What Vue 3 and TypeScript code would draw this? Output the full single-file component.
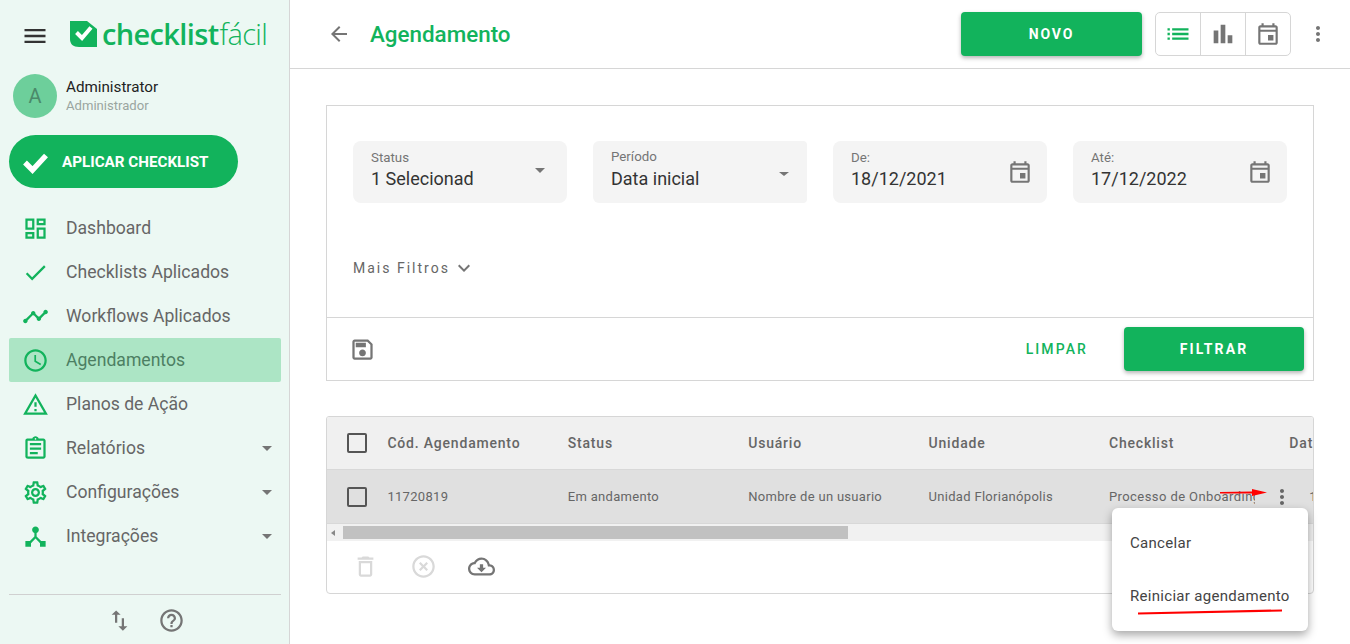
<script setup lang="ts">
const P: Record<string, string> = {
  menu: 'M3 18h18v-2H3v2zm0-5h18v-2H3v2zm0-7v2h18V6H3z',
  dash: 'M19 5v2h-4V5h4M9 5v6H5V5h4m10 8v6h-4v-6h4M9 17v2H5v-2h4M21 3h-8v6h8V3zM11 3H3v10h8V3zm10 8h-8v10h8V11zm-10 4H3v6h8v-6z',
  check: 'M9 16.17L4.83 12l-1.42 1.41L9 19 21 7l-1.41-1.41z',
  timeline: 'M23 8c0 1.1-.9 2-2 2-.18 0-.35-.02-.51-.07l-3.56 3.55c.05.16.07.34.07.52 0 1.1-.9 2-2 2s-2-.9-2-2c0-.18.02-.36.07-.52l-2.55-2.55c-.16.05-.34.07-.52.07s-.36-.02-.52-.07l-4.55 4.56c.05.16.07.33.07.51 0 1.1-.9 2-2 2s-2-.9-2-2 .9-2 2-2c.18 0 .35.02.51.07l4.56-4.55C8.02 9.36 8 9.18 8 9c0-1.1.9-2 2-2s2 .9 2 2c0 .18-.02.36-.07.52l2.55 2.55c.16-.05.34-.07.52-.07s.36.02.52.07l3.55-3.56C19.02 8.35 19 8.18 19 8c0-1.1.9-2 2-2s2 .9 2 2z',
  clock: 'M11.99 2C6.47 2 2 6.48 2 12s4.47 10 9.99 10C17.52 22 22 17.52 22 12S17.52 2 11.99 2zM12 20c-4.42 0-8-3.58-8-8s3.58-8 8-8 8 3.58 8 8-3.58 8-8 8zm.5-13H11v6l5.25 3.15.75-1.23-4.5-2.67z',
  warn: 'M12 5.99L19.53 19H4.47L12 5.99M12 2L1 21h22L12 2zm1 14h-2v2h2v-2zm0-6h-2v4h2v-4z',
  report: 'M7 15h7v2H7zm0-4h10v2H7zm0-4h10v2H7zm12-4h-4.18C14.4 1.84 13.3 1 12 1c-1.3 0-2.4.84-2.82 2H5c-.14 0-.27.01-.4.04-.39.08-.74.28-1.01.55-.18.18-.33.4-.43.64-.1.23-.16.49-.16.77v14c0 .27.06.54.16.78s.25.45.43.64c.27.27.62.47 1.01.55.13.02.26.03.4.03h14c1.1 0 2-.9 2-2V5c0-1.1-.9-2-2-2zm-7-.25c.41 0 .75.34.75.75s-.34.75-.75.75-.75-.34-.75-.75.34-.75.75-.75zM19 19H5V5h14v14z',
  gear: 'M19.43 12.98c.04-.32.07-.64.07-.98 0-.34-.03-.66-.07-.98l2.11-1.65c.19-.15.24-.42.12-.64l-2-3.46c-.09-.16-.26-.25-.44-.25-.06 0-.12.01-.17.03l-2.49 1c-.52-.4-1.08-.73-1.69-.98l-.38-2.65C14.46 2.18 14.25 2 14 2h-4c-.25 0-.46.18-.49.42l-.38 2.65c-.61.25-1.17.59-1.69.98l-2.49-1c-.06-.02-.12-.03-.18-.03-.17 0-.34.09-.43.25l-2 3.46c-.13.22-.07.49.12.64l2.11 1.65c-.04.32-.07.65-.07.98 0 .33.03.66.07.98l-2.11 1.65c-.19.15-.24.42-.12.64l2 3.46c.09.16.26.25.44.25.06 0 .12-.01.17-.03l2.49-1c.52.4 1.08.73 1.69.98l.38 2.65c.03.24.24.42.49.42h4c.25 0 .46-.18.49-.42l.38-2.65c.61-.25 1.17-.59 1.69-.98l2.49 1c.06.02.12.03.18.03.17 0 .34-.09.43-.25l2-3.46c.12-.22.07-.49-.12-.64l-2.11-1.65zm-1.98-1.71c.04.31.05.52.05.73 0 .21-.02.43-.05.73l-.14 1.13.89.7 1.08.84-.7 1.21-1.27-.51-1.04-.42-.9.68c-.43.32-.84.56-1.25.73l-1.06.43-.16 1.13-.2 1.35h-1.4l-.19-1.35-.16-1.13-1.06-.43c-.43-.18-.83-.41-1.23-.71l-.91-.7-1.06.43-1.27.51-.7-1.21 1.08-.84.89-.7-.14-1.13c-.03-.31-.05-.54-.05-.74s.02-.43.05-.73l.14-1.13-.89-.7-1.08-.84.7-1.21 1.27.51 1.04.42.9-.68c.43-.32.84-.56 1.25-.73l1.06-.43.16-1.13.2-1.35h1.39l.19 1.35.16 1.13 1.06.43c.43.18.83.41 1.23.71l.91.7 1.06-.43 1.27-.51.7 1.21-1.07.85-.89.7.14 1.13zM12 8c-2.21 0-4 1.79-4 4s1.79 4 4 4 4-1.79 4-4-1.79-4-4-4zm0 6c-1.1 0-2-.9-2-2s.9-2 2-2 2 .9 2 2-.9 2-2 2z',
  hub: 'M17 16l-4-4V8.82C14.16 8.4 15 7.3 15 6c0-1.66-1.34-3-3-3S9 4.34 9 6c0 1.3.84 2.4 2 2.82V12l-4 4H3v5h5v-3.05l4-4.2 4 4.2V21h5v-5h-4z',
  swap: 'M16 17.01V10h-2v7.01h-3L15 21l4-3.99h-3zM9 3L5 6.99h3V14h2V6.99h3L9 3z',
  help: 'M11 18h2v-2h-2v2zm1-16C6.48 2 2 6.48 2 12s4.48 10 10 10 10-4.48 10-10S17.52 2 12 2zm0 18c-4.41 0-8-3.59-8-8s3.59-8 8-8 8 3.59 8 8-3.59 8-8 8zm0-14c-2.21 0-4 1.79-4 4h2c0-1.1.9-2 2-2s2 .9 2 2c0 2-3 1.75-3 5h2c0-2.25 3-2.5 3-5 0-2.21-1.79-4-4-4z',
  back: 'M20 11H7.83l5.59-5.59L12 4l-8 8 8 8 1.41-1.41L7.83 13H20v-2z',
  list: 'M3 13h2v-2H3v2zm0 4h2v-2H3v2zm0-8h2V7H3v2zm4 4h14v-2H7v2zm0 4h14v-2H7v2zM7 7v2h14V7H7z',
  bars: 'M4 9h4v11H4zm12 4h4v7h-4zm-6-9h4v16h-4z',
  event: 'M19 4h-1V2h-2v2H8V2H6v2H5c-1.11 0-1.99.9-1.99 2L3 20c0 1.1.89 2 2 2h14c1.1 0 2-.9 2-2V6c0-1.1-.9-2-2-2zm0 16H5V10h14v10zm0-12H5V6h14v2zm-7 5h5v5h-5z',
  more: 'M12 8c1.1 0 2-.9 2-2s-.9-2-2-2-2 .9-2 2 .9 2 2 2zm0 2c-1.1 0-2 .9-2 2s.9 2 2 2 2-.9 2-2-.9-2-2-2zm0 6c-1.1 0-2 .9-2 2s.9 2 2 2 2-.9 2-2-.9-2-2-2z',
  expand: 'M16.59 8.59L12 13.17 7.41 8.59 6 10l6 6 6-6z',
  save: 'M17 3H5c-1.11 0-2 .9-2 2v14c0 1.1.89 2 2 2h14c1.1 0 2-.9 2-2V7l-4-4zm2 16H5V5h11.17L19 7.83V19zm-7-7c-1.66 0-3 1.34-3 3s1.34 3 3 3 3-1.34 3-3-1.34-3-3-3zM6 6h9v4H6z',
  trash: 'M6 19c0 1.1.9 2 2 2h8c1.1 0 2-.9 2-2V7H6v12zM8 9h8v10H8V9zm7.5-5l-1-1h-5l-1 1H5v2h14V4z',
  off: 'M14.59 8L12 10.59 9.41 8 8 9.41 10.59 12 8 14.59 9.41 16 12 13.41 14.59 16 16 14.59 13.41 12 16 9.41 14.59 8zM12 2C6.47 2 2 6.47 2 12s4.47 10 10 10 10-4.47 10-10S17.53 2 12 2zm0 18c-4.41 0-8-3.59-8-8s3.59-8 8-8 8 3.59 8 8-3.59 8-8 8z',
  cloud: 'M19.35 10.04C18.67 6.59 15.64 4 12 4 9.11 4 6.6 5.64 5.35 8.04 2.34 8.36 0 10.91 0 14c0 3.31 2.69 6 6 6h13c2.76 0 5-2.24 5-5 0-2.64-2.05-4.78-4.65-4.96zM19 18H6c-2.21 0-4-1.79-4-4 0-2.05 1.53-3.76 3.56-3.97l1.07-.11.5-.95C8.08 7.14 9.94 6 12 6c2.62 0 4.88 1.86 5.39 4.43l.3 1.5 1.53.11c1.56.1 2.78 1.41 2.78 2.96 0 1.65-1.35 3-3 3zm-5.55-8h-2.9v3H8l4 4 4-4h-2.55z',
}

const nav = [
  { label: 'Dashboard', icon: P.dash },
  { label: 'Checklists Aplicados', icon: P.check },
  { label: 'Workflows Aplicados', icon: P.timeline },
  { label: 'Agendamentos', icon: P.clock, active: true },
  { label: 'Planos de Ação', icon: P.warn },
  { label: 'Relatórios', icon: P.report, caret: true },
  { label: 'Configurações', icon: P.gear, caret: true },
  { label: 'Integrações', icon: P.hub, caret: true },
]

const fields = [
  { label: 'Status', value: '1 Selecionado', kind: 'caret' },
  { label: 'Período', value: 'Data inicial', kind: 'caret' },
  { label: 'De:', value: '18/12/2021', kind: 'date' },
  { label: 'Até:', value: '17/12/2022', kind: 'date' },
]

const headers = ['Cód. Agendamento', 'Status', 'Usuário', 'Unidade', 'Checklist', 'Data']
const cells = ['11720819', 'Em andamento', 'Nombre de un usuario', 'Unidad Florianópolis']
</script>

<template>
  <div class="app">
    <aside class="side">
      <div class="brand">
        <svg class="ic burger" viewBox="0 0 24 24"><path :d="P.menu" /></svg>
        <svg class="mark" viewBox="0 0 27 26">
          <path d="M0 0H17L27 8V26H9C3 26 0 23 0 18Z" fill="#12b35c" />
          <path d="M6.5 11.5L12 17 21 6.5" fill="none" stroke="#fff" stroke-width="4" />
        </svg>
        <span class="logo"><b>checklist</b><i>fácil</i></span>
      </div>

      <div class="user">
        <div class="avatar">A</div>
        <div class="who">
          <div class="name">Administrator</div>
          <div class="role">Administrador</div>
        </div>
      </div>

      <button class="apply">
        <svg viewBox="0 0 27 24"><path d="M3 12.5L10.5 20 24 5.5" fill="none" stroke="#fff" stroke-width="5.4" /></svg>
        <span>APLICAR CHECKLIST</span>
      </button>

      <nav class="nav">
        <a v-for="n in nav" :key="n.label" class="item" :class="{ active: n.active }">
          <svg class="ic nav-ic" viewBox="0 0 24 24"><path :d="n.icon" /></svg>
          <span class="lbl">{{ n.label }}</span>
          <span v-if="n.caret" class="caret side-caret"></span>
        </a>
      </nav>

      <div class="side-foot">
        <svg class="ic foot-ic" viewBox="0 0 24 24"><path :d="P.swap" /></svg>
        <svg class="ic foot-ic" viewBox="0 0 24 24"><path :d="P.help" /></svg>
      </div>
    </aside>

    <main class="main">
      <header class="top">
        <svg class="ic back" viewBox="0 0 24 24"><path :d="P.back" /></svg>
        <h1>Agendamento</h1>
        <button class="btn novo">NOVO</button>
        <div class="views">
          <span class="view"><svg class="ic on" viewBox="0 0 24 24"><path :d="P.list" /></svg></span>
          <span class="view"><svg class="ic" viewBox="0 0 24 24"><path :d="P.bars" /></svg></span>
          <span class="view"><svg class="ic cal" viewBox="0 0 24 24"><path :d="P.event" /></svg></span>
        </div>
        <svg class="ic top-more" viewBox="0 0 24 24"><path :d="P.more" /></svg>
      </header>

      <section class="card filters">
        <div class="fields">
          <div v-for="f in fields" :key="f.label" class="field">
            <div class="f-text">
              <div class="f-label">{{ f.label }}</div>
              <div class="f-value">{{ f.value }}</div>
            </div>
            <span v-if="f.kind === 'caret'" class="caret f-caret"></span>
            <svg v-else class="ic f-date" viewBox="0 0 24 24"><path :d="P.event" /></svg>
          </div>
        </div>
        <div class="more-f">
          <span>Mais Filtros</span>
          <svg class="ic" viewBox="0 0 24 24"><path :d="P.expand" /></svg>
        </div>
        <div class="f-foot">
          <svg class="ic save" viewBox="0 0 24 24"><path :d="P.save" /></svg>
          <span class="limpar">LIMPAR</span>
          <button class="btn filtrar">FILTRAR</button>
        </div>
      </section>

      <section class="card table">
        <div class="row head">
          <span class="box"></span>
          <span v-for="h in headers" :key="h" class="cell">{{ h }}</span>
        </div>
        <div class="row body">
          <span class="box"></span>
          <span v-for="c in cells" :key="c" class="cell">{{ c }}</span>
          <span class="cell actions">
            <span class="clip">Processo de Onboarding</span>
            <svg class="ic" viewBox="0 0 24 24"><path :d="P.more" /></svg>
          </span>
          <span class="cell last">18/12/2021</span>
        </div>
        <div class="scroll">
          <span class="arrow"></span>
          <span class="thumb"></span>
        </div>
        <div class="t-foot">
          <svg class="ic dim" viewBox="0 0 24 24"><path :d="P.trash" /></svg>
          <svg class="ic dim" viewBox="0 0 24 24"><path :d="P.off" /></svg>
          <svg class="ic cl" viewBox="0 0 24 24"><path :d="P.cloud" /></svg>
        </div>
      </section>

      <div class="menu">
        <div class="m-item">Cancelar</div>
        <div class="m-item">Reiniciar agendamento</div>
      </div>
      <svg class="mark-arrow" viewBox="0 0 48 10"><path d="M0 4L32 3.5V1L47 4.5 32 8V5.5L0 5.5Z" fill="#f00" /></svg>
      <svg class="mark-line" viewBox="0 0 146 6"><path d="M1 4.5L145 1.5" stroke="#f00" stroke-width="2.2" fill="none" /></svg>
    </main>
  </div>
</template>

<style>
html, body { margin: 0; background: #fff; overflow: hidden; }
</style>

<style scoped>
.app {
  display: flex;
  width: 1350px;
  height: 644px;
  overflow: hidden;
  font-family: Roboto, "Liberation Sans", sans-serif;
  color: #666;
}
.ic { width: 24px; height: 24px; fill: #757575; flex: none; display: block; }
.btn {
  border: 0;
  border-radius: 4px;
  background: #12b35c;
  color: #fff;
  font: 700 14px Roboto, sans-serif;
  letter-spacing: 1.9px;
  box-shadow: 0 2px 4px rgba(0, 0, 0, .3);
}

/* sidebar */
.side {
  width: 289px;
  flex: none;
  display: flex;
  flex-direction: column;
  background: #ecf8f3;
  border-right: 1px solid #d6d6d6;
}
.brand { display: flex; align-items: center; height: 68px; padding-left: 21px; }
.burger { width: 28px; height: 28px; fill: #333; margin-top: 4px; }
.mark { width: 27px; height: 26px; margin-left: 21px; flex: none; }
.logo { margin-left: 5px; margin-top: -1px; font-family: "Open Sans", sans-serif; font-size: 29px; color: #12b35c; letter-spacing: -.65px; white-space: nowrap; }
.logo b { font-weight: 600; }
.logo i { font-style: normal; font-weight: 300; margin-left: 1px; }
.user { display: flex; align-items: center; margin: 6px 0 0 13px; }
.avatar {
  width: 44px;
  height: 44px;
  border-radius: 50%;
  background: #6dcf9b;
  color: #4a8a6a;
  font-size: 20px;
  display: flex;
  align-items: center;
  justify-content: center;
}
.who { margin-left: 9px; }
.name { font-size: 15.2px; line-height: 18px; color: #222; margin-top: 1px; }
.role { font-size: 13.1px; line-height: 18px; color: #9aa5a0; margin-top: 1px; }
.apply {
  display: flex;
  align-items: center;
  width: 229px;
  height: 53px;
  margin: 17px 0 0 9px;
  padding: 0 0 0 13px;
  border: 0;
  border-radius: 27px;
  background: #12b35c;
  color: #fff;
  font: 700 15.2px Roboto, sans-serif;
}
.apply svg { width: 27px; height: 24px; flex: none; }
.apply span { margin-left: 13px; }
.nav { margin-top: 18px; display: flex; flex-direction: column; }
.item {
  display: flex;
  align-items: center;
  height: 44px;
  margin: 0 8px 0 9px;
  padding-left: 13px;
  border-radius: 2px;
}
.item.active { background: #ace5c5; }
.nav-ic { width: 27px; height: 27px; fill: #12b35c; }
.lbl { margin-left: 17px; font-size: 17.6px; color: #666; }
.item.active .lbl { color: #4c7f63; }
.caret { width: 0; height: 0; border-style: solid; border-color: #757575 transparent transparent; border-width: 5px 5px 0; }
.side-caret { margin-left: auto; margin-right: 9px; }
.side-foot {
  margin: auto 8px 0 9px;
  height: 47px;
  padding-top: 2px;
  border-top: 1px solid #d0d0d0;
  display: flex;
  align-items: center;
  justify-content: center;
  gap: 25px;
}
.foot-ic { width: 27px; height: 27px; }

/* main */
.main { position: relative; flex: 1; min-width: 0; }
.top {
  display: flex;
  align-items: center;
  height: 68px;
  padding: 0 20px 0 37px;
  box-sizing: content-box;
  border-bottom: 1px solid #d6d6d6;
}
.top h1 { margin: 0 0 0 19px; font-size: 22.4px; font-weight: 500; color: #12b35c; }
.novo { width: 181px; height: 44px; margin-left: auto; }
.views {
  display: flex;
  height: 42px;
  margin-left: 13px;
  border: 1px solid #d6d6d6;
  border-radius: 5px;
}
.view { width: 44px; display: flex; align-items: center; justify-content: center; }
.view + .view { border-left: 1px solid #d6d6d6; }
.view .ic { width: 28px; height: 28px; }
.view .on { fill: #12b35c; }
.view .cal { width: 26px; height: 26px; }
.top-more { margin-left: 15px; }
.card { margin-left: 36px; width: 986px; border: 1px solid #d6d6d6; background: #fff; }
.filters { margin-top: 36px; }
.fields { display: flex; gap: 26px; padding: 35px 26px 0; }
.field {
  width: 214px;
  height: 62px;
  box-sizing: border-box;
  padding: 9px 16px 0 18px;
  display: flex;
  background: #f4f4f4;
  border-radius: 8px;
}
.f-text { flex: 1; min-width: 0; width: 0; }
.f-label { font-size: 13.3px; line-height: 16px; color: #757575; }
.f-value { font-size: 18px; line-height: 24px; margin-top: 1px; color: #333; white-space: nowrap; overflow: hidden; max-width: 102px; }
.field:nth-child(n + 2) .f-value { max-width: none; }
.field:nth-child(2) .f-label { margin-top: -1px; }
.field:nth-child(2) .f-value { margin-top: 2px; }
.field:nth-child(2) { border-radius: 6px 4px 4px 6px; }
.f-caret { margin-top: 18px; margin-right: 6px; }
.field:nth-child(2) .f-caret { margin-top: 22px; margin-right: 2px; border-width: 4px 5px 0; }
.f-date { width: 26px; height: 26px; margin-top: 9px; margin-right: -2px; }
.more-f {
  display: flex;
  align-items: center;
  height: 24px;
  margin: 53px 0 0 26px;
  font-size: 14px;
  letter-spacing: 2px;
  color: #666;
}
.more-f .ic { margin-left: 2px; }
.f-foot {
  display: flex;
  align-items: center;
  height: 62px;
  margin-top: 37px;
  padding: 0 9px 0 22px;
  border-top: 1px solid #d6d6d6;
}
.save { width: 27px; height: 27px; }
.limpar { margin-left: auto; color: #12b35c; font-weight: 500; font-size: 14px; letter-spacing: 2.1px; }
.filtrar { width: 180px; height: 44px; margin-left: 36px; letter-spacing: 2.1px; }
.table { margin-top: 35px; height: 176px; border-radius: 3px 3px 4px 4px; overflow: hidden; }
.row { display: flex; align-items: center; white-space: nowrap; border-bottom: 1px solid #d8d8d8; }
.head { height: 52px; background: #f0f0f0; font-size: 14px; font-weight: 500; letter-spacing: .8px; color: #666; }
.body { height: 53px; background: #e0e0e0; font-size: 13px; letter-spacing: .3px; color: #666; }
.box { width: 16px; height: 16px; border: 2px solid #555; border-radius: 2px; margin: 0 20.4px 0 20px; flex: none; }
.cell { width: 180.4px; flex: none; }
.actions { display: flex; align-items: center; }
.clip { width: 146px; letter-spacing: .42px; overflow: hidden; flex: none; }
.actions .ic { margin-left: 15px; fill: #666; }
.last { margin-left: 20px; }
.scroll { display: flex; align-items: center; height: 17px; background: #f1f1f1; }
.arrow { width: 0; height: 0; margin-left: 4px; border-style: solid; border-color: transparent #888 transparent transparent; border-width: 3.5px 4px 3.5px 0; }
.thumb { width: 505px; height: 13px; margin-left: 8px; background: #c1c1c1; }
.t-foot { display: flex; align-items: center; gap: 31px; padding: 12px 0 0 25px; }
.t-foot .ic { width: 27px; height: 27px; }
.t-foot .dim { fill: #d9d9d9; }
.menu {
  position: absolute;
  left: 822px;
  top: 508px;
  width: 196px;
  height: 123px;
  box-sizing: border-box;
  padding-top: 9px;
  background: #fff;
  border-radius: 6px;
  box-shadow: 0 4px 10px rgba(0, 0, 0, .35);
}
.m-item { height: 53px; line-height: 53px; padding-left: 18px; font-size: 15px; letter-spacing: .3px; color: #444; white-space: nowrap; }
.mark-arrow { position: absolute; left: 930px; top: 488px; width: 48px; height: 10px; }
.mark-line { position: absolute; left: 847px; top: 609px; width: 146px; height: 6px; }
</style>
